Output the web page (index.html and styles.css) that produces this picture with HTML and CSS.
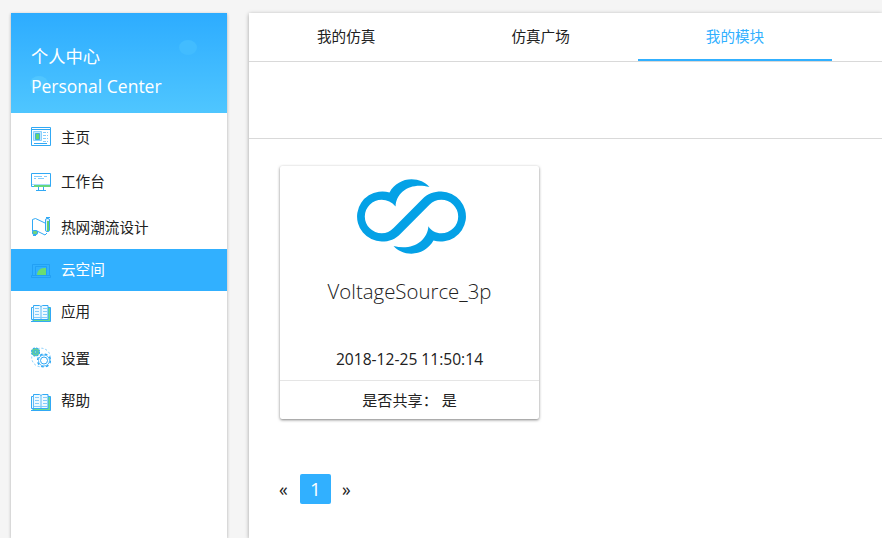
FILE: index.html
```
<!DOCTYPE html>
<html lang="zh-CN">
<head>
<meta charset="utf-8">
<title>个人中心</title>
<link rel="stylesheet" href="styles.css">
</head>
<body>
<svg width="0" height="0" class="defs">
  <symbol id="book" viewBox="0 0 20 17">
    <path d="M2 2.500h17.500v14H2z" fill="#6bdc8a" stroke="#31a9f5"/>
    <path d="M.5 2.500h2V.5h6L10 1.500l1.500-1h5.500v14H.5z" fill="#eef9ff" stroke="#31a9f5"/>
    <path d="M10 2v12M2.500 2v12" stroke="#60bcf8" fill="none"/>
    <path d="M4 3.500h4M4 6.500h4M4 9.500h4M12 3.500h4M12 6.500h4M12 9.500h4M3 12.500h14" stroke="#83ccfc" fill="none"/>
    <path d="M0 16.500h19" stroke="#31a9f5"/>
  </symbol>
</svg>
<div class="page">
  <aside class="sidebar">
    <header class="banner">
      <i class="bubble bubble-right"></i><i class="bubble bubble-left"></i>
      <p>个人中心</p><p class="en">Personal Center</p>
    </header>
    <nav class="menu">
      <a class="item home">
        <svg width="20" height="19" viewBox="0 0 20 19" fill="none" stroke="#31a9f5"><path d="M.5.5h19v18H.5zM.5 2.500h19"/><path d="M2.500 4.500h8v9h-8z" fill="#c4e8ff" stroke="#8bd0fc"/><path d="M4.500 6.500h4v6h-4z" fill="#66d66c" stroke="#3bafe0"/><path d="M12 5.500h5M12 8.500h5M12 11.500h5M12 14.500h5" stroke="#83ccfc" stroke-dasharray="3 1"/><path d="M3 16.500h13"/></svg>
        <span>主页</span></a>
      <a class="item desk">
        <svg width="20" height="18" viewBox="0 0 20 18" fill="none" stroke="#31a9f5"><path d="M.5.5h19v13H.5z"/><path d="M1 11.500h18" stroke="#a6dcfc"/><path d="M3 13h16" stroke="#65d77d" stroke-width="2"/><path d="M7.500 14v3M12.500 14v3M5 17.500h10"/><path d="M3 3.500h8M13 3.500h3M3 5.500h2M7 5.500h6" stroke="#83ccfc"/></svg>
        <span>工作台</span></a>
      <a class="item heat">
        <svg width="20" height="20" viewBox="0 0 20 20" fill="none" stroke="#31a9f5"><path d="M1.500 14V2.500l3-1L14 6M6 14l8 4 2-2"/><rect x="14.500" y="1.500" width="4" height="13" rx="1.500" fill="#d9f1ff" stroke="#31a9f5"/><path d="M17 4v10" stroke="#65cf70" stroke-width="2"/><rect x="1.500" y="13.500" width="5" height="4" rx="1.500" fill="#70d47c"/><path d="M2 18.500h3M15 .5h4"/></svg>
        <span>热网潮流设计</span></a>
      <a class="item active">
        <svg width="20" height="15" viewBox="0 0 20 15" fill="none" stroke="#1c9af0"><path d="M1.500 11V.5h17V11M4.500 11V2.500h11V11M.5 11.500h19v2h-19z" opacity=".7"/><path d="M6 11C6 7 9 4 13 4h2v7z" fill="#6bdc72" stroke="none"/></svg>
        <span>云空间</span></a>
      <a class="item app"><svg width="20" height="17"><use href="#book"/></svg><span>应用</span></a>
      <a class="item settings">
        <svg width="20" height="21" viewBox="0 0 20 21" fill="none" stroke="#31a9f5"><circle cx="10" cy="10.500" r="9.300" stroke-dasharray="2 2" stroke="#79c9fb"/><circle cx="13" cy="13.500" r="6.300" fill="#fff" stroke-width="1.600" stroke-dasharray="2.700 2.250"/><circle cx="13" cy="13.500" r="5.500" fill="#fff" stroke="#58b9f8"/><circle cx="13" cy="13.500" r="3.500"/><circle cx="4.500" cy="5" r="4" fill="#63cf9a" stroke-width="1.200" stroke-dasharray="2 1.140"/><circle cx="4.500" cy="5" r="1.500" fill="#8ee7a2"/></svg>
        <span>设置</span></a>
      <a class="item help"><svg width="20" height="17"><use href="#book"/></svg><span>帮助</span></a>
    </nav>
  </aside>
  <main class="content">
    <nav class="tabs"><a>我的仿真</a><a>仿真广场</a><a class="current">我的模块</a></nav>
    <div class="toolbar"></div>
    <section class="card">
      <svg class="logo" viewBox="51 41 328 224" preserveAspectRatio="none"><path fill="#04a1e6" d="M150 81C164 56 189 42 215 42C237 42 256 51 268 65C214 50 170 78 168 123C157 110 143 103 127 103A50 50 0 1 0 127 203C141 203 152 197 162 187L248 100C262 85 281 78 303 78A75 75 0 1 1 280 225C266 250 241 264 215 264C193 264 174 255 162 241C216 256 262 227 265 182C273 196 287 203 303 203A50 50 0 1 0 303 103C289 103 278 108 268 118L182 205C168 220 149 228 127 228A75 75 0 1 1 150 81Z"/></svg>
      <h2>VoltageSource_3p</h2>
      <time>2018-12-25 11:50:14</time>
      <footer>是否共享： 是</footer>
    </section>
    <div class="pager"><a>«</a><a class="page-current">1</a><a>»</a></div>
  </main>
</div>
</body>
</html>
```
FILE: styles.css
```
* { box-sizing: border-box; }
body {
  margin: 0;
  height: 538px;
  overflow: hidden;
  background: #f5f5f5;
  color: #212121;
  font-family: "Open Sans", "Noto Sans CJK SC", sans-serif;
  font-size: 14.6px;
}
.defs { position: absolute; }
.page { display: flex; gap: 22px; height: 538px; padding: 13px 0 0 11px; overflow: hidden; }
.sidebar { width: 216px; flex: none; height: 525px; background: #fff; box-shadow: 0 1px 3px rgba(0,0,0,.3); }
.banner {
  position: relative;
  height: 100px;
  padding: 29px 20px 0;
  background: linear-gradient(#2dacff, #4fc6ff);
  color: #fff;
  font-size: 17.3px;
  line-height: 30px;
}
.banner p { position: relative; margin: 0; white-space: nowrap; }
.banner .en { margin-top: -1px; font-size: 17.5px; }
.bubble { position: absolute; width: 18px; height: 15px; border-radius: 50%; background: #42bcff; }
.bubble-right { left: 168px; top: 27px; }
.bubble-left { left: 19px; top: 63px; background: #50c6ff; }
.menu { padding-top: 4px; }
.item { display: flex; align-items: center; gap: 10px; height: 42px; padding-left: 20px; line-height: 20px; }
.item span { margin-top: -2px; }
.item svg { flex: none; }
.home svg { margin-top: -3px; }
.desk { height: 44px; padding-top: 2px; }
.heat { height: 46px; padding-top: 4px; }
.heat svg { margin-top: -2px; }
.active { background: #31b0ff; color: #fff; }
.active svg { margin-top: 3px; }
.app svg, .help svg { margin-top: 3px; }
.settings { height: 47px; padding-top: 5px; }
.settings svg { margin-top: -3px; }
.content { flex: 1; min-width: 0; height: 525px; background: #fff; box-shadow: 0 1px 4px rgba(0,0,0,.35); }
.tabs { display: flex; height: 49px; border-bottom: 1px solid #d9d9d9; }
.tabs a { flex: none; width: 194.4px; height: 48px; line-height: 46px; text-align: center; }
.tabs .current { color: #31b0ff; border-bottom: 2px solid #31b0ff; }
.toolbar { height: 77px; border-bottom: 1px solid #d9d9d9; }
.card {
  display: flex;
  flex-direction: column;
  align-items: center;
  width: 259px;
  height: 253px;
  margin: 27px 0 0 31px;
  padding-top: 13px;
  background: #fff;
  border-radius: 2px;
  box-shadow: 0 1px 3px rgba(0,0,0,.5);
}
.logo { width: 111px; height: 75px; margin-left: 3px; }
h2 { margin: 21px 0 0; font-size: 20.4px; font-weight: 300; line-height: 32px; }
time { margin-top: 40px; font-size: 15.6px; line-height: 24px; }
footer { width: 100%; height: 39px; margin-top: auto; border-top: 1px solid #e5e5e5; font-size: 15.1px; line-height: 38px; text-align: center; }
.pager { display: flex; align-items: center; gap: 11px; margin: 55px 0 0 30px; height: 30px; font-size: 17.5px; }
.pager a:first-child { width: 10px; }
.page-current { width: 31px; height: 30px; border-radius: 2px; background: #31b0ff; color: #fff; font-size: 19px; line-height: 30px; text-align: center; }
```
